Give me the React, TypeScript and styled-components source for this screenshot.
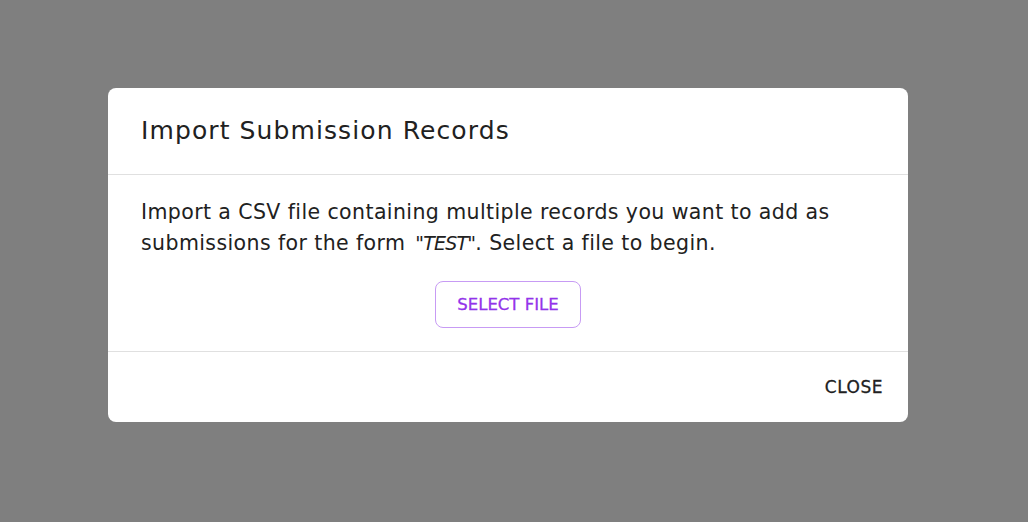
import React from 'react';
import styled, { createGlobalStyle } from 'styled-components';

const GlobalStyle = createGlobalStyle`
  html, body {
    margin: 0;
    padding: 0;
    height: 100%;
  }
  body {
    font-family: "DejaVu Sans", "Noto Sans", sans-serif;
    color: #212121;
  }
  #root {
    height: 100%;
  }
`;

const Backdrop = styled.div`
  width: 100%;
  height: 100%;
  background: #7f7f7f;
  display: flex;
  align-items: center;
  justify-content: center;
  padding: 0 12px 12px 0;
  box-sizing: border-box;
`;

const Dialog = styled.div`
  width: 800px;
  background: #fff;
  border-radius: 8px;
  display: flex;
  flex-direction: column;
`;

const Header = styled.div`
  padding: 25px 33px;
  border-bottom: 1px solid #e0e0e0;
`;

const Title = styled.h2`
  margin: 0;
  font-size: 25px;
  line-height: 36px;
  font-weight: 400;
  letter-spacing: 1.1px;
  color: #212121;
`;

const Body = styled.div`
  padding: 22px 33px 23px;
  border-bottom: 1px solid #e0e0e0;
  display: flex;
  flex-direction: column;
  align-items: center;
  gap: 22px;
`;

const Text = styled.p`
  margin: 0;
  align-self: stretch;
  font-size: 20.5px;
  line-height: 31px;
  letter-spacing: 0.4px;
  color: #212121;
`;

const Quoted = styled.em`
  margin-left: 3px;
  font-size: 19px;
  letter-spacing: -0.8px;
`;

const OutlineButton = styled.button`
  font-family: inherit;
  height: 47px;
  padding: 0 21px;
  border: 1px solid #c79bf4;
  border-radius: 8px;
  background: #fff;
  color: #9333ea;
  font-size: 16.5px;
  font-weight: 400;
  -webkit-text-stroke: 0.3px #9333ea;
  text-transform: uppercase;
`;

const Footer = styled.div`
  height: 70px;
  display: flex;
  align-items: center;
  justify-content: flex-end;
  padding: 0 17px;
`;

const TextButton = styled.button`
  font-family: inherit;
  border: 0;
  background: none;
  padding: 8px;
  color: #212121;
  font-size: 17px;
  font-weight: 400;
  letter-spacing: 0.5px;
  -webkit-text-stroke: 0.3px #212121;
  text-transform: uppercase;
`;

export default function App() {
  return (
    <>
      <GlobalStyle />
      <Backdrop>
        <Dialog>
          <Header>
            <Title>Import Submission Records</Title>
          </Header>
          <Body>
            <Text>
              Import a CSV file containing multiple records you want to add as submissions for the form{' '}
              <Quoted>"TEST"</Quoted>. Select a file to begin.
            </Text>
            <OutlineButton>Select file</OutlineButton>
          </Body>
          <Footer>
            <TextButton>Close</TextButton>
          </Footer>
        </Dialog>
      </Backdrop>
    </>
  );
}
